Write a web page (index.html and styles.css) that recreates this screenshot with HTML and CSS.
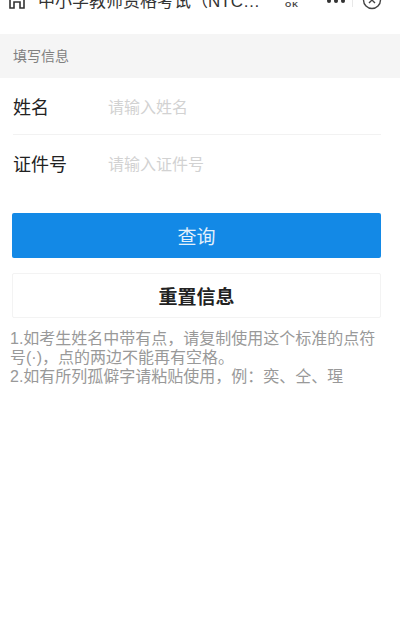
FILE: index.html
```html
<!DOCTYPE html>
<html lang="zh">
<head>
<meta charset="utf-8">
<title>填写信息</title>
<link rel="stylesheet" href="styles.css">
</head>
<body>
<header class="topbar">
  <svg class="home" viewBox="0 0 16 18" width="16" height="18"><path d="M1 17V8l7-7 7 7v9h-4v-6H5v6H1Z" fill="none" stroke="#333" stroke-width="1.600"/></svg>
  <div class="title">中小学教师资格考试（NTC…</div>
  <div class="ok">OK</div>
  <svg class="dots" viewBox="0 0 18 4" width="18" height="4"><circle cx="2" cy="1" r="2" fill="#333"/><circle cx="9" cy="1" r="2" fill="#333"/><circle cx="16" cy="1" r="2" fill="#333"/></svg>
  <div class="sep"></div>
  <svg class="close" viewBox="0 0 20 10" width="20" height="10"><circle cx="10" cy="0" r="8.500" fill="none" stroke="#444" stroke-width="1.400"/><path d="m7 -3 6 6m0-6-6 6" stroke="#444" stroke-width="1.400"/></svg>
</header>
<div class="section">填写信息</div>
<div class="form">
  <div class="row row-line"><span class="label">姓名</span><span class="ph">请输入姓名</span></div>
  <div class="row"><span class="label">证件号</span><span class="ph">请输入证件号</span></div>
</div>
<div class="btn primary">查询</div>
<div class="btn secondary">重置信息</div>
<div class="notes">
  <p>1.如考生姓名中带有点，请复制使用这个标准的点符号(·)，点的两边不能再有空格。</p>
  <p>2.如有所列孤僻字请粘贴使用，例：奕、仝、瑆</p>
</div>
</body>
</html>
```
FILE: styles.css
```css
* { box-sizing: border-box; }
html, body { margin: 0; padding: 0; }
body {
  width: 400px;
  height: 633px;
  overflow: hidden;
  background: #fff;
  color: #333;
  font-family: "Liberation Sans", "Noto Sans CJK SC", sans-serif;
}
.topbar {
  height: 34px;
  display: flex;
  align-items: flex-start;
  padding-left: 9px;
  overflow: hidden;
}
.home { margin-top: -9px; flex: none; }
.title {
  margin-left: 13px;
  margin-top: -10px;
  width: 224px;
  flex: none;
  font-size: 17px;
  line-height: 24px;
  white-space: nowrap;
  color: #333;
}
.ok {
  margin-left: 23px;
  margin-top: 1px;
  width: 16px;
  flex: none;
  font-size: 8px;
  font-weight: bold;
  line-height: 8px;
  letter-spacing: 1px;
  color: #444;
}
.dots { margin-left: 26px; flex: none; }
.sep { width: 1px; height: 7px; background: #e8e8e8; margin-left: 7px; flex: none; }
.close { margin-left: 9px; flex: none; }
.section {
  height: 44px;
  background: #f5f5f5;
  padding-left: 13px;
  font-size: 14px;
  line-height: 44px;
  color: #808080;
}
.form { margin: 0 19px 0 13px; height: 135px; }
.row { height: 56px; display: flex; align-items: center; }
.row-line { height: 57px; border-bottom: 1px solid #f2f2f2; }
.label { width: 95px; font-size: 18px; color: #222; }
.ph { font-size: 16px; color: #d2d2d2; }
.btn {
  margin: 0 19px 0 12px;
  display: flex;
  align-items: center;
  justify-content: center;
  font-size: 19px;
  border-radius: 2px;
}
.primary { height: 45px; background: #1389e6; color: #e3f1fb; }
.secondary {
  height: 45px;
  margin-top: 15px;
  border: 1px solid #f3f3f3;
  color: #222;
  font-weight: bold;
}
.notes { margin: 11px 13px 0 10px; font-size: 16px; line-height: 19px; color: #999; }
.notes p { margin: 0; }
```
